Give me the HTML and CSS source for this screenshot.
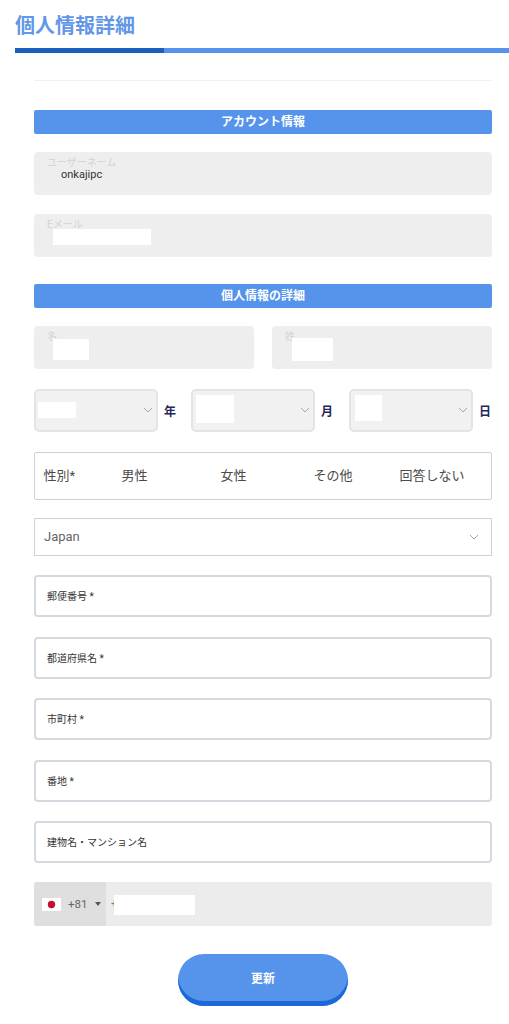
FILE: index.html
```html
<!DOCTYPE html>
<html lang="ja">
<head>
<meta charset="utf-8">
<title>個人情報詳細</title>
<link rel="stylesheet" href="styles.css">
</head>
<body>
<header class="page-head">
  <h1 class="page-title">個人情報詳細</h1>
  <div class="title-bar"><span class="title-bar-dark"></span></div>
</header>
<main class="form">
  <hr class="rule">
  <h2 class="section">アカウント情報</h2>
  <div class="field filled mt-18">
    <span class="float-label">ユーザーネーム</span>
    <span class="value">onkajipc</span>
  </div>
  <div class="field filled mt-19">
    <span class="float-label">Eメール</span>
    <span class="mask mask-email"></span>
  </div>
  <h2 class="section mt-27">個人情報の詳細</h2>
  <div class="row-two mt-18">
    <div class="field filled">
      <span class="float-label">名</span>
      <span class="mask mask-first"></span>
    </div>
    <div class="field filled">
      <span class="float-label">姓</span>
      <span class="mask mask-last"></span>
    </div>
  </div>
  <div class="row-date">
    <div class="date-select">
      <span class="mask mask-year"></span>
      <svg class="chev" viewBox="0 0 10 6"><path d="M1 1l4 4 4-4"/></svg>
    </div>
    <span class="date-unit">年</span>
    <div class="date-select">
      <span class="mask mask-month"></span>
      <svg class="chev" viewBox="0 0 10 6"><path d="M1 1l4 4 4-4"/></svg>
    </div>
    <span class="date-unit">月</span>
    <div class="date-select">
      <span class="mask mask-day"></span>
      <svg class="chev" viewBox="0 0 10 6"><path d="M1 1l4 4 4-4"/></svg>
    </div>
    <span class="date-unit">日</span>
  </div>
  <div class="gender">
    <span class="g-label">性別*</span>
    <span class="g-male">男性</span>
    <span class="g-female">女性</span>
    <span class="g-other">その他</span>
    <span class="g-none">回答しない</span>
  </div>
  <div class="country">
    <span>Japan</span>
    <svg class="chev" viewBox="0 0 10 6"><path d="M1 1l4 4 4-4"/></svg>
  </div>
  <div class="input mt-19">郵便番号 *</div>
  <div class="input mt-20">都道府県名 *</div>
  <div class="input mt-19">市町村 *</div>
  <div class="input mt-20">番地 *</div>
  <div class="input mt-19">建物名・マンション名</div>
  <div class="phone">
    <div class="dial">
      <svg class="flag" viewBox="0 0 19 13"><rect width="19" height="13" fill="#fff"/><circle cx="9.5" cy="6.5" r="3.7" fill="#c8102e"/></svg>
      <span class="dial-code">+81</span>
      <svg class="caret" viewBox="0 0 6 4"><path d="M0 0h6L3 4z"/></svg>
    </div>
    <span class="phone-plus">+</span>
    <span class="mask mask-phone"></span>
  </div>
  <div class="actions"><button class="submit" type="button">更新</button></div>
</main>
</body>
</html>
```
FILE: styles.css
```css
* { box-sizing: border-box; }
html, body { margin: 0; padding: 0; background: #fff; }
body {
  width: 509px;
  height: 1024px;
  overflow: hidden;
  font-family: Roboto, "Noto Sans CJK JP", sans-serif;
  color: #333;
}
.page-head { padding: 15px 0 0 15px; }
.page-title {
  margin: 0;
  font-size: 20px;
  line-height: 22px;
  font-weight: 700;
  color: #6197e6;
}
.title-bar {
  height: 5px;
  margin-top: 11px;
  background: #5594ea;
}
.title-bar-dark { display: block; width: 149px; height: 5px; background: #1b5fbe; }
.form { padding: 27px 17px 0 34px; }
.rule { margin: 0; border: 0; height: 1px; background: #f0f0f0; }
.section {
  margin: 29px 0 0;
  height: 24px;
  border-radius: 2px;
  background: #5594ea;
  color: #fff;
  font-size: 12px;
  font-weight: 700;
  line-height: 25px;
  text-align: center;
}
.mt-18 { margin-top: 18px; }
.mt-19 { margin-top: 19px; }
.mt-20 { margin-top: 20px; }
.mt-27 { margin-top: 27px; }
.field {
  position: relative;
  height: 43px;
  border-radius: 4px;
}
.filled { background: #eeeeee; }
.float-label {
  position: absolute;
  left: 13px;
  top: 5px;
  font-size: 10px;
  line-height: 12px;
  color: #d3d3d3;
}
.value {
  position: absolute;
  left: 27px;
  top: 15px;
  font-size: 11px;
  line-height: 15px;
  color: #333;
}
.mask { position: absolute; background: #fff; }
.mask-email { left: 19px; top: 15px; width: 98px; height: 16px; }
.mask-first { left: 19px; top: 13px; width: 36px; height: 21px; }
.mask-last { left: 20px; top: 12px; width: 41px; height: 23px; }
.row-two { display: grid; grid-template-columns: 220px 220px; gap: 18px; }
.row-date {
  display: grid;
  grid-template-columns: 124px 33px 124px 34px 124px 19px;
  margin-top: 20px;
  height: 43px;
  align-items: center;
}
.date-select {
  position: relative;
  height: 43px;
  border: 2px solid #e2e4e8;
  border-radius: 5px;
  background: #f1f1f1;
}
.date-select .chev { position: absolute; right: 3px; top: 16px; }
.date-select .mask-year { left: 2px; top: 11px; width: 38px; height: 16px; }
.date-select .mask-month { left: 3px; top: 4px; width: 38px; height: 28px; }
.date-select .mask-day { left: 4px; top: 4px; width: 27px; height: 26px; }
.chev { width: 10px; height: 6px; fill: none; stroke: #a7a7a7; stroke-width: 1; }
.date-unit {
  padding-left: 6px;
  font-size: 12px;
  font-weight: 700;
  color: #26265c;
}
.gender {
  position: relative;
  margin-top: 20px;
  height: 48px;
  border: 1px solid #ccd3da;
  border-radius: 2px;
  font-size: 13px;
  line-height: 46px;
  color: #4a4a4a;
}
.gender span { position: absolute; top: 0; }
.g-label { left: 8.5px; }
.g-male { left: 86.5px; }
.g-female { left: 185.5px; }
.g-other { left: 278.5px; }
.g-none { left: 364.5px; }
.country {
  display: flex;
  justify-content: space-between;
  align-items: center;
  margin-top: 18px;
  height: 38px;
  padding: 0 12px 2px 9px;
  border: 1px solid #ccd3da;
  font-size: 13px;
  color: #666;
}
.country .chev { margin-top: 2px; }
.input {
  display: flex;
  align-items: center;
  height: 42px;
  padding: 0 0 2px 11px;
  border: 2px solid #d6d9e0;
  border-radius: 4px;
  font-size: 10px;
  color: #333;
}
.phone {
  position: relative;
  display: flex;
  align-items: center;
  margin-top: 19px;
  height: 44px;
  border-radius: 3px;
  background: #ececec;
  overflow: hidden;
}
.dial {
  display: flex;
  align-items: center;
  width: 72px;
  height: 44px;
  padding-left: 8px;
  background: #dfdfdf;
}
.flag { width: 19px; height: 13px; display: block; }
.dial-code { margin-left: 7px; font-size: 11.5px; color: #666; }
.caret { width: 6px; height: 4px; margin-left: 8px; fill: #555; }
.phone-plus { margin-left: 5px; font-size: 12px; color: #777; }
.mask-phone { left: 80px; top: 13px; width: 81px; height: 20px; }
.actions { display: flex; justify-content: center; margin-top: 28px; }
.submit {
  width: 170px;
  height: 52px;
  padding: 0 0 5px;
  border: 0;
  border-radius: 26px;
  background: #5594ea;
  box-shadow: inset 0 -5px 0 #1b68d8;
  color: #fff;
  font-family: inherit;
  font-size: 12px;
  font-weight: 700;
}
```
